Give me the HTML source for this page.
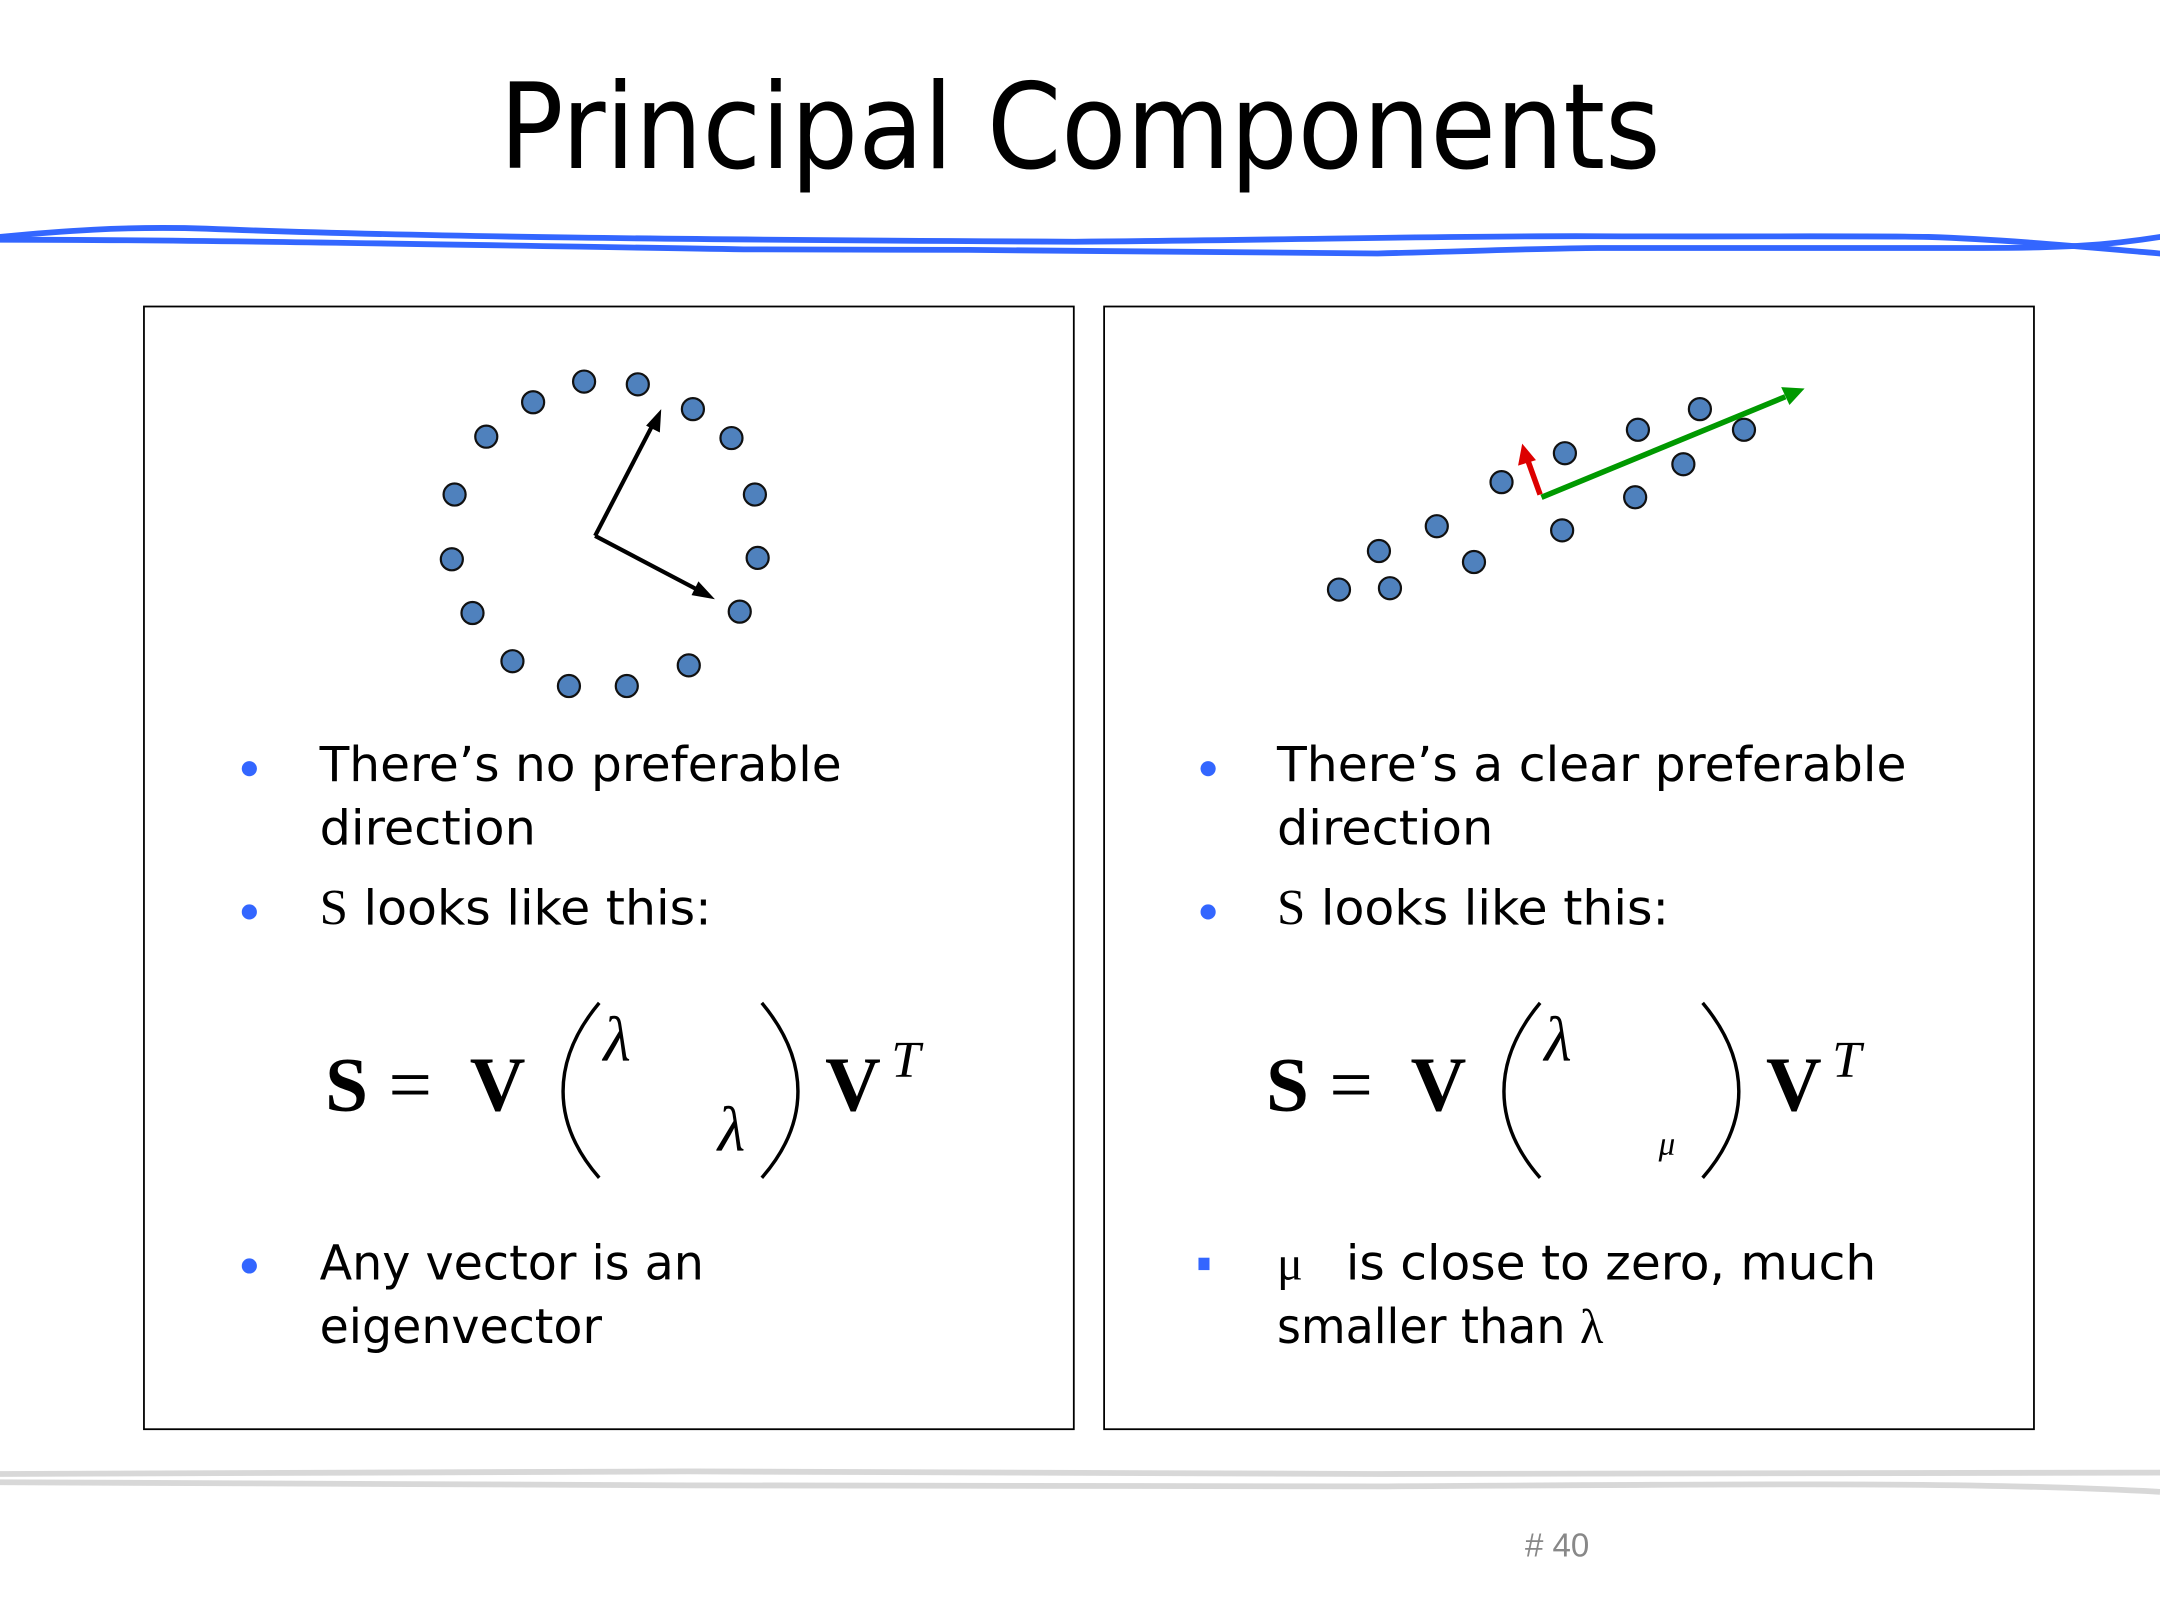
<!DOCTYPE html>
<html><head><meta charset="utf-8"><style>
html,body{margin:0;padding:0;background:#fff;}
svg{display:block;}
</style></head><body>
<svg width="2160" height="1620" viewBox="0 0 1568 1176" xmlns="http://www.w3.org/2000/svg">
<rect width="1568" height="1176" fill="#fff"/>
<text x="784" y="122" text-anchor="middle" font-family="'DejaVu Sans','Liberation Sans',sans-serif" font-size="86" textLength="843" lengthAdjust="spacingAndGlyphs" fill="#000">Principal Components</text>
<g fill="none" stroke="#3366ff" stroke-width="4.2" stroke-linecap="round">
<path d="M0,172 C40,168 90,164 150,166 C300,172 500,174 780,175.5 C950,174 1060,171 1160,171.5 C1260,172 1340,171 1400,172 C1460,174 1520,180 1568,184"/>
<path d="M0,174 C150,174 350,178 540,181 C700,181 800,182 1000,184 C1080,182 1130,180 1160,180 C1300,180 1400,180 1440,180 C1500,180 1530,178 1568,172"/>
</g>
<g fill="none" stroke="#d8d8d8" stroke-width="4.2">
<path d="M0,1070 C300,1067 700,1068 1000,1070 C1300,1071 1450,1070 1568,1069"/>
<path d="M0,1076 C300,1077 700,1080 1000,1079 C1300,1077 1450,1076 1568,1083"/>
</g>
<rect x="104.5" y="222.5" width="675" height="815" fill="none" stroke="#000" stroke-width="1.3"/>
<rect x="801.5" y="222.5" width="675" height="815" fill="none" stroke="#000" stroke-width="1.3"/>
<g fill="#4f81bd" stroke="#111" stroke-width="1.6">
<circle cx="424" cy="277" r="8"/><circle cx="463" cy="279" r="8"/><circle cx="503" cy="297" r="8"/><circle cx="531" cy="318" r="8"/><circle cx="548" cy="359" r="8"/><circle cx="550" cy="405" r="8"/><circle cx="537" cy="444" r="8"/><circle cx="500" cy="483" r="8"/><circle cx="455" cy="498" r="8"/><circle cx="413" cy="498" r="8"/><circle cx="372" cy="480" r="8"/><circle cx="343" cy="445" r="8"/><circle cx="328" cy="406" r="8"/><circle cx="330" cy="359" r="8"/><circle cx="353" cy="317" r="8"/><circle cx="387" cy="292" r="8"/>
<circle cx="972" cy="428" r="8"/><circle cx="1009" cy="427" r="8"/><circle cx="1001" cy="400" r="8"/><circle cx="1043" cy="382" r="8"/><circle cx="1070" cy="408" r="8"/><circle cx="1090" cy="350" r="8"/><circle cx="1136" cy="329" r="8"/><circle cx="1134" cy="385" r="8"/><circle cx="1189" cy="312" r="8"/><circle cx="1187" cy="361" r="8"/><circle cx="1222" cy="337" r="8"/><circle cx="1234" cy="297" r="8"/><circle cx="1266" cy="312" r="8"/>
</g>
<g stroke="#000" stroke-width="3" fill="none"><path d="M432,389 L474,308"/><path d="M432,389 L508,429"/></g>
<polygon points="480,297 479,314 469,309" fill="#000"/>
<polygon points="519,435 502,432 507,422" fill="#000"/>
<path d="M1119,361 L1296,288" stroke="#009900" stroke-width="4" fill="none"/>
<polygon points="1310,282 1293,281 1299,294" fill="#009900"/>
<path d="M1118,359 L1109,334" stroke="#dd0000" stroke-width="4" fill="none"/>
<polygon points="1105,322 1102,338 1115,334" fill="#dd0000"/>
<g font-family="'DejaVu Sans','Liberation Sans',sans-serif" font-size="35" fill="#000">
<circle cx="181" cy="558" r="5.5" fill="#3366ff"/>
<circle cx="181" cy="662" r="5.5" fill="#3366ff"/>
<circle cx="181" cy="919" r="5.5" fill="#3366ff"/>
<text x="232" y="567" textLength="379" lengthAdjust="spacingAndGlyphs">There’s no preferable</text>
<text x="232" y="613" textLength="157" lengthAdjust="spacingAndGlyphs">direction</text>
<text x="232" y="671"><tspan font-family="'Liberation Serif',serif" font-size="37">S</tspan><tspan textLength="264" lengthAdjust="spacingAndGlyphs"> looks like this:</tspan></text>
<text x="232" y="929" textLength="279" lengthAdjust="spacingAndGlyphs">Any vector is an</text>
<text x="232" y="975" textLength="205" lengthAdjust="spacingAndGlyphs">eigenvector</text>
<circle cx="877" cy="558" r="5.5" fill="#3366ff"/>
<circle cx="877" cy="662" r="5.5" fill="#3366ff"/>
<rect x="870" y="913" width="8" height="9" fill="#3366ff"/>
<text x="927" y="567" textLength="457" lengthAdjust="spacingAndGlyphs">There’s a clear preferable</text>
<text x="927" y="613" textLength="157" lengthAdjust="spacingAndGlyphs">direction</text>
<text x="927" y="671"><tspan font-family="'Liberation Serif',serif" font-size="37">S</tspan><tspan textLength="264" lengthAdjust="spacingAndGlyphs"> looks like this:</tspan></text>
<text x="927" y="929"><tspan font-family="'Liberation Serif',serif">μ</tspan></text>
<text x="977" y="929" textLength="385" lengthAdjust="spacingAndGlyphs">is close to zero, much</text>
<text x="927" y="975"><tspan textLength="220" lengthAdjust="spacingAndGlyphs">smaller than </tspan><tspan font-family="'Liberation Serif',serif">λ</tspan></text>
</g>
<g font-family="'Liberation Serif','DejaVu Serif',serif" fill="#000">
<g id="f1">
<text x="236" y="806" font-size="56" font-weight="bold">S</text>
<text x="282" y="806" font-size="56">=</text>
<text x="341" y="806" font-size="56" font-weight="bold">V</text>
<text x="599" y="806" font-size="56" font-weight="bold">V</text>
<text x="647" y="782" font-size="38" font-style="italic">T</text>
<path d="M435,728 C400,770 400,815 435,855" stroke="#000" stroke-width="2.5" fill="none"/>
<path d="M553,728 C588,770 588,815 553,855" stroke="#000" stroke-width="2.5" fill="none"/>
</g>
<text x="438" y="770" font-size="46" font-style="italic">λ</text>
<text x="521" y="835" font-size="46" font-style="italic">λ</text>
<use href="#f1" x="683" y="0"/>
<text x="1121" y="770" font-size="46" font-style="italic">λ</text>
<text x="1204" y="838" font-size="24" font-style="italic">μ</text>
</g>
<text x="1107" y="1130" font-family="'Liberation Sans',sans-serif" font-size="24" fill="#888">#  40</text>
</svg>
</body></html>
